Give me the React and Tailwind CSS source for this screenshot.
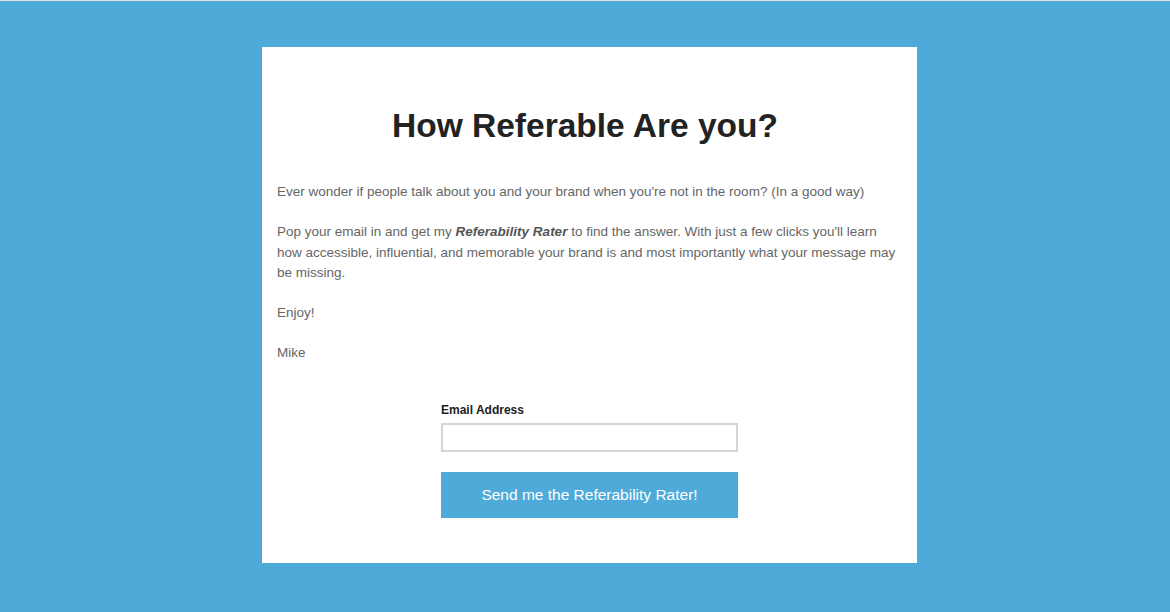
export default function App() {
  return (
    <div
      className="h-[612px] w-full bg-[#4eabd9] border-t border-[#dfe3e6] pt-[46px]"
      style={{ fontFamily: '"Liberation Sans", Arial, sans-serif' }}
    >
      <div className="ml-[262px] w-[655px] h-[516px] bg-white px-[15px] pt-[58px]">
        <h1 className="pr-[9px] text-center text-[33.5px] leading-[41px] font-bold text-[#222]">
          How Referable Are you?
        </h1>

        <div className="mt-[36px] text-[13.5px] leading-[20.5px] text-[#666] space-y-[19.5px]">
          <p>
            Ever wonder if people talk about you and your brand when you're not in the room? (In a good way)
          </p>
          <p>
            Pop your email in and get my <strong className="italic font-bold text-[#555]">Referability Rater</strong> to
            find the answer. With just a few clicks you'll learn how accessible, influential, and memorable your brand
            is and most importantly what your message may be missing.
          </p>
          <p>Enjoy!</p>
          <p>Mike</p>
        </div>

        {/* Signup form */}
        <form className="mx-auto mt-[39px] w-[297px]" onSubmit={(e) => e.preventDefault()}>
          <label className="block text-[12px] leading-[15px] font-bold text-[#222]">Email Address</label>
          <input
            type="email"
            className="mt-[5px] block w-full h-[29px] border-2 border-[#d4d4d4] bg-white px-2 text-[13px] outline-none"
          />
          <button
            type="submit"
            className="mt-[20px] block w-full h-[46px] bg-[#4eabd9] text-white text-[15.5px]"
          >
            Send me the Referability Rater!
          </button>
        </form>
      </div>
    </div>
  );
}
